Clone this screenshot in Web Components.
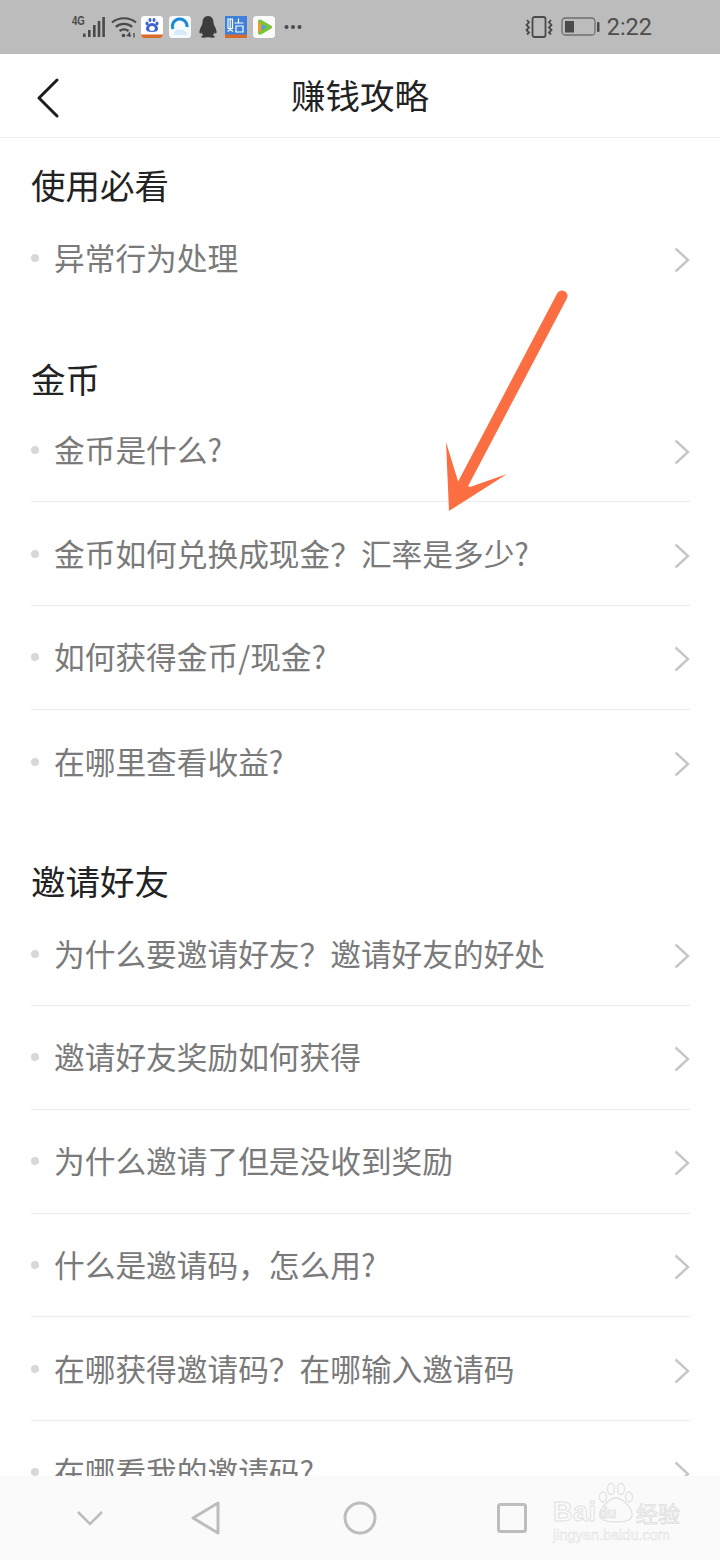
<!DOCTYPE html>
<html lang="zh-CN">
<head>
<meta charset="utf-8">
<title>赚钱攻略</title>
<style>
html,body{margin:0;padding:0;background:#fff}
body{font-family:"Noto Sans CJK SC","Noto Sans",sans-serif}
</style>
</head>
<body>
<phone-screen>
  <status-bar slot="top"></status-bar>
  <top-nav slot="top" title="赚钱攻略"></top-nav>
  <faq-section heading="使用必看" style="--head-h:68px;--head-b:2px">
    <faq-row last>异常行为处理</faq-row>
  </faq-section>
  <faq-section heading="金币" style="--head-h:89px;--head-b:.5px">
    <faq-row>金币是什么?</faq-row>
    <faq-row>金币如何兑换成现金&#xFF1F;汇率是多少?</faq-row>
    <faq-row>如何获得金币/现金?</faq-row>
    <faq-row last>在哪里查看收益?</faq-row>
  </faq-section>
  <faq-section heading="邀请好友" style="--head-h:89px;--head-b:2px">
    <faq-row>为什么要邀请好友&#xFF1F;邀请好友的好处</faq-row>
    <faq-row>邀请好友奖励如何获得</faq-row>
    <faq-row>为什么邀请了但是没收到奖励</faq-row>
    <faq-row>什么是邀请码&#xFF0C;怎么用?</faq-row>
    <faq-row>在哪获得邀请码&#xFF1F;在哪输入邀请码</faq-row>
    <faq-row>在哪看我的邀请码?</faq-row>
  </faq-section>
  <call-arrow slot="over"></call-arrow>
  <nav-bar slot="over"></nav-bar>
  <bd-watermark slot="over"></bd-watermark>
</phone-screen>
<script>
function def(name, html){
  customElements.define(name, class extends HTMLElement{
    connectedCallback(){
      if(this.shadowRoot) return;
      const r=this.attachShadow({mode:'open'});
      r.innerHTML=typeof html==='function'?html(this):html;
    }
  });
}
const CJK='"Noto Sans CJK SC","Noto Sans",sans-serif';
def('phone-screen',`<style>
:host{display:block;position:relative;width:720px;height:1560px;overflow:hidden;background:#fff}
.top{display:block}
main{display:flex;flex-direction:column;padding:0 30px 0 31px}
</style><div class="top"><slot name="top"></slot></div><main><slot></slot></main><slot name="over"></slot>`);

def('status-bar',`<style>
:host{display:flex;align-items:center;height:54px;background:#bcbcbc;color:#4a4a4a;box-sizing:border-box;padding:0 68px 0 71px;font-family:Roboto,sans-serif}
svg{display:block;flex:none}
.net{position:relative;width:40px;height:24px;flex:none}
.g{position:absolute;left:1px;top:0;font:700 12px/13px "Liberation Sans",sans-serif;transform:scaleX(.8);transform-origin:0 0;color:#4a4a4a}
.net svg{position:absolute;left:0;top:0}
.apps{display:flex;align-items:center;margin-left:4px}
.sp{flex:1}
.t{font-size:23.5px;line-height:54px;margin-left:7px;color:#4d4d4d}
</style>
<div class="net"><span class="g">4G</span>
<svg width="40" height="24" viewBox="0 0 40 24" fill="#4a4a4a"><rect x="12" y="18.500" width="2.600" height="3.500"/><rect x="17" y="15" width="2.600" height="7"/><rect x="22" y="10" width="2.600" height="12"/><rect x="26.700" y="6" width="2.600" height="16"/><rect x="31.300" y="2" width="2.600" height="20"/></svg></div>
<svg width="26" height="22" viewBox="0 0 26 22" fill="none" stroke="#4a4a4a" stroke-width="2.200"><path d="M1 6.500C7.500 .8 18.500 .8 25 6.500"/><path d="M4.800 10.800C9.500 6.800 16.500 6.800 21.200 10.800"/><path d="M8.500 15c2.700-2 6.300-2 9 0"/><circle cx="12.500" cy="19.500" r="1.800" fill="#4a4a4a" stroke="none"/><path d="M18.500 21v-4l-2 2.500h3.500M23 17v4.500" stroke-width="1.300"/></svg>
<div class="apps">
<app-tile><svg width="22" height="22" viewBox="0 0 22 22"><rect width="22" height="22" rx="3.500" fill="#fff"/><g fill="#3d62c9"><ellipse cx="6" cy="7.500" rx="1.500" ry="2"/><ellipse cx="9" cy="4" rx="1.500" ry="2"/><ellipse cx="13" cy="4" rx="1.500" ry="2"/><ellipse cx="16" cy="7.500" rx="1.500" ry="2"/><path d="M11 7c-3 0-6 3-6 6 0 2 2 3 6 3s6-1 6-3c0-3-3-6-6-6z"/></g><ellipse cx="11" cy="12.500" rx="2.800" ry="2.400" fill="#fff"/><path d="M0 18.500h22a3.500 3.500 0 0 1-3.500 3.500h-15A3.500 3.500 0 0 1 0 18.500z" fill="#d96a2b"/></svg></app-tile>
<app-tile style="margin-left:6px"><svg width="22" height="22" viewBox="0 0 22 22"><rect width="22" height="22" rx="3.500" fill="#f6fafd"/><path d="M4 13A7.300 7.300 0 1 1 18 11" fill="none" stroke="#1a88d8" stroke-width="3"/><path d="M5 19c-1-3 2-6 5-5 2-1.500 5-.5 6 1.500 2 0 3 2 2 3.500z" fill="#d6ebf8"/></svg></app-tile>
<svg width="20" height="22" viewBox="0 0 20 22" fill="#3c3c3c" style="margin-left:7px"><path d="M10 0c-3.800 0-5.500 3-5.500 6.500 0 1-.2 2-.8 3C2.300 12 1 14.500 1.500 17c.3 1 1 .7 2-.6.300 1 .8 2 1.700 2.800C3.800 19.700 3 20.300 3.200 21c.5 1 3.800 1 5.300.3.500-.2 2.500-.2 3 0 1.500.7 4.800.7 5.300-.3.200-.7-.6-1.300-2-1.800.9-.8 1.400-1.800 1.700-2.800 1 1.300 1.700 1.600 2 .6.500-2.500-.8-5-2.200-7.500-.6-1-.8-2-.8-3C15.500 3 13.800 0 10 0z"/></svg>
<app-tile style="margin-left:7px"><svg width="22" height="22" viewBox="0 0 22 22"><rect width="22" height="22" fill="#3d7fd9"/><path d="M3 3h4.500v9.500H3zM5.200 3v11M2.500 15.500 5.200 13.500 8 15.500M9.500 7h9M13.500 2.500V7M11 10h7v6h-7z" fill="none" stroke="#fff" stroke-width="1.200"/><rect y="18.500" width="22" height="3.500" fill="#d96a2b"/></svg></app-tile>
<app-tile style="margin-left:6px"><svg width="22" height="22" viewBox="0 0 22 22"><rect width="22" height="22" rx="3.500" fill="#fafafa"/><path d="M5 5.500C5 3.600 6.700 3 8 3.800l10 5.700c1.400.8 1.400 2.400 0 3.200L8 18.400c-1.500.8-3 0-3-1.900z" fill="#7cc23b"/><path d="M5 5.500 12.500 11 5 16.500z" fill="#f29b24"/><path d="M8.500 8 14 11 8.500 14.200z" fill="#3fa7e0"/></svg></app-tile>
<svg width="18" height="6" viewBox="0 0 18 6" fill="#4a4a4a" style="margin-left:9px"><circle cx="2.500" cy="3" r="2"/><circle cx="9" cy="3" r="2"/><circle cx="15.500" cy="3" r="2"/></svg>
</div>
<div class="sp"></div>
<svg width="28" height="22" viewBox="0 0 28 22" fill="none" stroke="#4a4a4a" style="margin-right:8px"><rect x="7.500" y="1" width="13" height="20" rx="2" stroke-width="1.800"/><path d="M2 4 4 6.300 1.500 9l2.500 2.500L1.500 14l2.500 2.500L2 18.500M26 4l-2 2.300L26.500 9 24 11.500 26.500 14 24 16.500l2 2" stroke-width="1.800"/></svg>
<svg width="39" height="20" viewBox="0 0 39 20" fill="none"><rect x="1" y="1" width="33" height="17" rx="3.500" stroke="#6f6f6f" stroke-width="1.300"/><rect x="4" y="4" width="9" height="11.500" fill="#4a4a4a"/><rect x="36" y="5" width="2.500" height="10" rx="1" fill="#4a4a4a"/></svg>
<span class="t">2:22</span>`);

def('app-tile',`<style>:host{display:block;width:22px;height:22px;flex:none}::slotted(svg){display:block}</style><slot></slot>`);

def('top-nav',t=>`<style>
:host{display:flex;align-items:center;justify-content:center;position:relative;height:84px;box-sizing:border-box;border-bottom:1px solid #efefef;background:#fff;padding-bottom:4px}
h1{margin:0;font:400 34.500px/40px ${CJK};color:#222}
svg{position:absolute;left:36px;top:24px}
</style><svg width="24" height="40" viewBox="0 0 24 40" fill="none" stroke="#1c1c1c" stroke-width="3" stroke-linecap="round" stroke-linejoin="round"><path d="M21 2 3 20l18 18"/></svg><h1>${t.getAttribute('title')}</h1>`);

def('faq-section',t=>`<style>
:host{display:block;flex:none}
h2{margin:0;display:flex;align-items:flex-end;box-sizing:border-box;height:var(--head-h,87.500px);padding-bottom:var(--head-b,1px);font:400 34.500px/40px ${CJK};color:#222}
.w{display:flex;flex-direction:column}
</style><h2>${t.getAttribute('heading')}</h2><div class="w"><slot></slot></div>`);

def('faq-row',t=>`<style>
:host{display:flex;align-items:center;height:103.700px;box-sizing:border-box;flex:none;border-bottom:${t.hasAttribute('last')?'0':'1px solid #ececec'};color:#7a7a7a;font:400 30.700px/40px ${CJK}}
i{width:8px;height:8px;border-radius:50%;background:#d8d8d8;margin-right:15px;flex:none}
span{flex:1;white-space:nowrap;margin-bottom:2px}
svg{flex:none;margin-top:4px}
</style><i></i><span><slot></slot></span><svg width="16" height="26" viewBox="0 0 16 26" fill="none" stroke="#c6c6c6" stroke-width="2.400"><path d="M1.500 1.500 14 13 1.500 24.500"/></svg>`);

def('call-arrow',`<style>:host{position:absolute;left:430px;top:280px;width:150px;height:240px}svg{display:block}</style>
<svg width="150" height="240" viewBox="430 280 150 240"><path d="M562 296 463 484" stroke="#fb6e41" stroke-width="11" stroke-linecap="round" fill="none"/><path d="M446 442 458 481 470 487 507 474 449 511z" fill="#fb6e41"/></svg>`);

def('nav-bar',`<style>:host{position:absolute;left:0;top:1476px;width:720px;height:84px;background:#fafafa}svg{display:block}</style>
<svg width="720" height="84" viewBox="0 1476 720 84" fill="none" stroke="#bdbdbd" stroke-width="3"><path d="M78 1512 90 1524 102 1512" stroke-width="2.500"/><path d="M218 1503V1533L193 1518z" stroke-linejoin="round"/><ellipse cx="360" cy="1518" rx="15" ry="15"/><rect x="498.500" y="1504.500" width="27" height="27" rx="2"/></svg>`);

def('bd-watermark',`<style>
:host{position:absolute;left:553px;top:1482px;width:130px;height:62px;color:transparent;pointer-events:none}
.a{position:absolute;-webkit-text-stroke:1px #e2e2e2;white-space:nowrap}
.b{left:0;top:16px;font:700 27px/28px "Liberation Sans",sans-serif;letter-spacing:.5px}
.j{left:46px;top:22px;font:700 14px/18px "Liberation Sans",sans-serif}
.c{left:83px;top:17px;font:400 22px/26px ${CJK}}
.u{left:0;top:45px;font:400 14.500px/17px "Liberation Sans",sans-serif;-webkit-text-stroke:.5px #e2e2e2}
svg{position:absolute;left:44px;top:0}
</style><span class="a b">Bai</span><svg width="38" height="42" viewBox="0 0 38 42" fill="none" stroke="#e2e2e2" stroke-width="1.300"><ellipse cx="6" cy="15" rx="3.500" ry="5"/><ellipse cx="14" cy="7" rx="3.500" ry="5.500"/><ellipse cx="24" cy="7" rx="3.500" ry="5.500"/><ellipse cx="32" cy="15" rx="3.500" ry="5"/><path d="M19 16C13 16 3 25 3 33c0 5 5 7 16 7s16-2 16-7c0-8-10-17-16-17z"/></svg><span class="a j">du</span><span class="a c">经验</span><span class="a u">jingyan.baidu.com</span>`);
</script>
</body>
</html>
